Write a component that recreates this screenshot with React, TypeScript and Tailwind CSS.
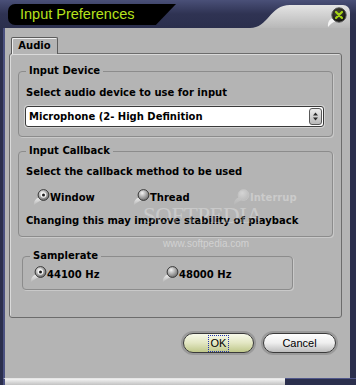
import { useId } from "react";

const LABEL = "text-[10px] font-bold leading-[14px] text-black";

function Radio({ checked, disabled }: { checked?: boolean; disabled?: boolean }) {
  const id = useId();
  const ring = disabled ? "#c4c4c4" : "#383838";
  return (
    <svg width="17" height="17" viewBox="0 0 17 17" className="shrink-0">
      <defs>
        <radialGradient id={`b${id}`} cx="0.38" cy="0.32" r="0.7">
          <stop offset="0" stopColor={disabled ? "#d4d4d4" : "#f2f2f2"} />
          <stop offset="1" stopColor={disabled ? "#bcbcbc" : "#6e6e6e"} />
        </radialGradient>
        <linearGradient id={`t${id}`} x1="0" y1="0" x2="0" y2="1">
          <stop offset="0" stopColor={disabled ? "#c6c6c6" : "#ececec"} />
          <stop offset="1" stopColor="#b4b4b4" />
        </linearGradient>
      </defs>
      <path d="M1 16.5 C0.5 12.5 2.5 9.5 6 8.5 L8.5 11.5 C5.5 12.5 3 14 1 16.5 Z" fill={`url(#t${id})`} />
      <circle cx="10.5" cy="6" r="5.4" fill={`url(#b${id})`} stroke={ring} strokeWidth="1" />
      {checked && (
        <>
          <circle cx="10.5" cy="6" r="2.8" fill="#f4f4f4" />
          <circle cx="10.5" cy="6" r="1.5" fill="#1c1c1c" />
        </>
      )}
    </svg>
  );
}

function Option({ label, checked, disabled, className }: { label: string; checked?: boolean; disabled?: boolean; className?: string }) {
  return (
    <div className={`flex items-center ${className ?? ""}`}>
      <Radio checked={checked} disabled={disabled} />
      <span className={`text-[10px] font-bold leading-[14px] ${disabled ? "text-[#cbcbcb]" : "text-black"}`}>{label}</span>
    </div>
  );
}

function Group({ label, className, children }: { label: string; className: string; children: React.ReactNode }) {
  return (
    <div className={`relative rounded-[4px] border border-[#8c8c8c] shadow-[1px_1px_0_#c9c9c9] ${className}`}>
      <span className="absolute -top-[8px] left-[7px] bg-[#b4b4b4] px-[3px] text-[10px] font-bold leading-[13px] text-black">
        {label}
      </span>
      {children}
    </div>
  );
}

function CloseButton() {
  return (
    <svg width="22" height="22" viewBox="0 0 22 22">
      <defs>
        <radialGradient id="cb" cx="0.4" cy="0.35" r="0.7">
          <stop offset="0" stopColor="#4a4a3a" />
          <stop offset="1" stopColor="#0c0c0c" />
        </radialGradient>
      </defs>
      <path d="M2 21 C1.5 16 3.5 13 7 12 L10 15 C7 16 4.5 18 2 21 Z" fill="#f4f4f4" />
      <circle cx="13" cy="9" r="7.2" fill="url(#cb)" stroke="#5a5a5a" strokeWidth="1" />
      <path d="M10 6 L16 12 M16 6 L10 12" stroke="#a6d414" strokeWidth="2.2" strokeLinecap="round" />
    </svg>
  );
}

export default function App() {
  return (
    <div className="relative flex h-[385px] w-[356px] flex-col overflow-hidden bg-[#2b2f4d] font-['DejaVu_Sans',Verdana,sans-serif]">
      {/* title bar */}
      <div className="flex h-[28px] items-start bg-gradient-to-b from-[#4a5078] via-[#2f3353] to-[#2b2f4d]">
        <div className="ml-[8px] mt-[4px] flex h-[21px] w-[168px] items-center rounded-l-[7px] bg-black pl-[12px] [clip-path:polygon(0_0,100%_0,88%_100%,0_100%)]">
          <span className="font-['Liberation_Sans',Arial,sans-serif] text-[14.5px] leading-none text-[#b6e21c]">
            Input Preferences
          </span>
        </div>
        <div className="ml-auto mr-[6px] mt-[5px] flex h-[23px] items-start">
          <svg width="40" height="23" viewBox="0 0 40 23" className="block">
            <defs>
              <linearGradient id="tb" x1="0" y1="0" x2="0" y2="23" gradientUnits="userSpaceOnUse">
                <stop offset="0" stopColor="#e4e4e4" />
                <stop offset="1" stopColor="#b8b8b8" />
              </linearGradient>
            </defs>
            <path d="M0 23 C18 23 20 0 40 0 L40 23 Z" fill="url(#tb)" />
          </svg>
          <div className="flex h-[23px] w-[60px] justify-end rounded-tr-[7px] bg-gradient-to-b from-[#e4e4e4] to-[#b8b8b8] pr-[2px] pt-[1px]">
            <CloseButton />
          </div>
        </div>
      </div>

      {/* body */}
      <div className="ml-[3px] mr-[6px] flex flex-1 flex-col border-l-[2px] border-[#4b5180] bg-[#b4b4b4] text-black">
        <div className="ml-[6px] mt-[9px]">
          <div className="relative z-10 -mb-[1px] flex h-[17px] w-[47px] items-center justify-center rounded-t-[2px] border border-b-0 border-[#5c5c5c] bg-[#b4b4b4] shadow-[inset_1px_1px_0_#eeeeee]">
            <span className="text-[10px] font-bold leading-none">Audio</span>
          </div>
        </div>

        <div className="ml-[4px] flex h-[265px] w-[333px] flex-col rounded-[3px] border border-[#6c6c6c] shadow-[inset_1px_1px_0_#dadada]">
          <Group label="Input Device" className="ml-[8px] mt-[17px] h-[66px] w-[315px]">
            <div className={`ml-[7px] mt-[14px] ${LABEL}`}>Select audio device to use for input</div>
            <div className="ml-[6px] mt-[6px] flex h-[21px] w-[299px] items-center justify-between rounded-[3px] border border-[#3a3a3a] bg-white pl-[3px] pr-[1px] shadow-[0_0_0_1px_#d2d2d2]">
              <span className="text-[10px] font-bold leading-none">Microphone (2- High Definition</span>
              <div className="flex h-[17px] w-[13px] items-center justify-center rounded-[3px] border border-[#585858] bg-gradient-to-b from-[#ececec] to-[#b8b8b8]">
                <svg width="7" height="9" viewBox="0 0 7 9">
                  <path d="M3.5 0.5 L6 3.5 L1 3.5 Z M1 5.5 L6 5.5 L3.5 8.5 Z" fill="#2a2a2a" />
                </svg>
              </div>
            </div>
          </Group>

          <Group label="Input Callback" className="ml-[8px] mt-[14px] h-[86px] w-[315px]">
            <div className={`ml-[7px] mt-[13px] ${LABEL}`}>Select the callback method to be used</div>
            <div className="ml-[14px] mt-[10px] flex">
              <Option label="Window" checked className="w-[100px]" />
              <Option label="Thread" className="w-[100px]" />
              <Option label="Interrup" disabled />
            </div>
            <div className={`ml-[7px] mt-[8px] ${LABEL}`}>Changing this may improve stability of playback</div>
          </Group>

          <Group label="Samplerate" className="ml-[12px] mt-[19px] h-[34px] w-[271px]">
            <div className="ml-[7px] mt-[9px] flex">
              <Option label="44100 Hz" checked className="w-[132px]" />
              <Option label="48000 Hz" />
            </div>
          </Group>
        </div>

        <div className="mt-[15px] flex justify-end gap-[9px] pr-[14px] font-['Liberation_Sans',Arial,sans-serif] text-[11px]">
          <button className="flex h-[20px] w-[71px] items-center justify-center rounded-full border border-[#3a3a3a] bg-gradient-to-b from-[#f8faea] via-[#e2e6c2] to-[#bfc78a] shadow-[0_0_0_2px_#9a9a9a]">
            <span className="border border-dotted border-[#2434b0] px-[2px] leading-[15px]">OK</span>
          </button>
          <button className="flex h-[20px] w-[73px] items-center justify-center rounded-full border border-[#3a3a3a] bg-gradient-to-b from-[#ffffff] via-[#eeeeee] to-[#bdbdbd] shadow-[0_0_0_2px_#9a9a9a]">
            <span className="leading-[15px]">Cancel</span>
          </button>
        </div>
      </div>

      {/* bottom edge */}
      <div className="flex h-[7px]">
        <div className="ml-[3px] flex-1 border-l-[2px] border-t border-[#4b5180] border-t-[#e6e6e6] bg-gradient-to-b from-[#f2f2f2] to-[#c2c2c2]" />
        <div className="w-[71px] rounded-br-[4px] border-t border-[#50578a] bg-[#2b2f4d]" />
      </div>

      {/* watermark */}
      <div className="pointer-events-none absolute left-[143px] top-[204px] font-['Liberation_Serif',serif] text-[23px] leading-none tracking-[-0.5px] text-white/30">
        SOFTPEDIA
      </div>
      <div className="pointer-events-none absolute left-[163px] top-[239px] font-['Liberation_Sans',sans-serif] text-[10px] leading-none text-white/40">
        www.softpedia.com
      </div>
    </div>
  );
}
